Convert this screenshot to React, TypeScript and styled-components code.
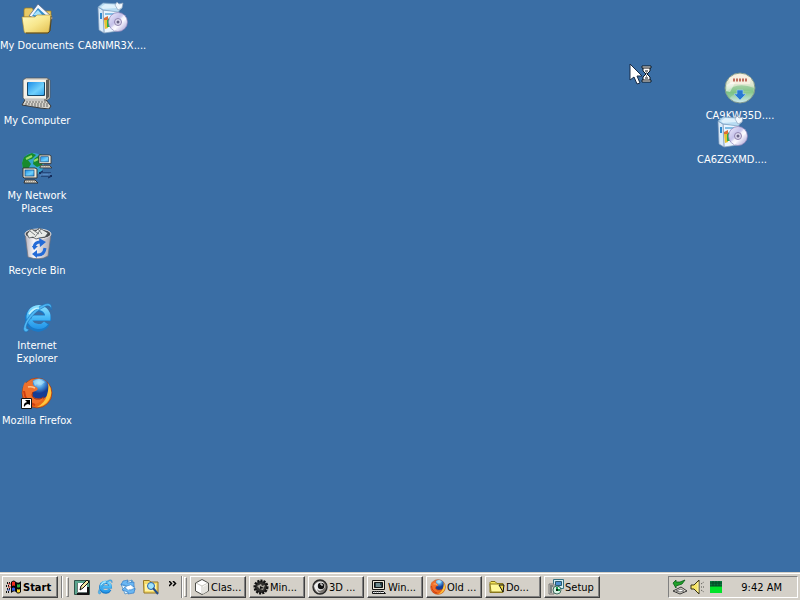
import React from "react";
import styled, { createGlobalStyle, css } from "styled-components";

const GlobalStyle = createGlobalStyle`
  * { box-sizing: border-box; }
  body {
    margin: 0;
    font-family: Tahoma, "DejaVu Sans Condensed", "DejaVu Sans", sans-serif;
    font-size: 11px;
    line-height: 13px;
    color: #000;
  }
  button { font: inherit; color: inherit; }
`;

const Screen = styled.div`
  display: flex;
  flex-direction: column;
  height: 100vh;
  overflow: hidden;
  background: #3a6ea5;
`;

const Desktop = styled.main`
  position: relative;
  flex: 1;
  min-height: 0;
  padding: 2px 0 0 1px;
`;

const IconGrid = styled.div`
  display: grid;
  grid-auto-flow: column;
  grid-template-rows: repeat(6, 72px);
  grid-auto-columns: 72px;
  gap: 3px;
`;

const Shortcut = styled.button`
  display: flex;
  flex-direction: column;
  align-items: center;
  gap: 5px;
  width: 72px;
  padding: 0;
  border: 0;
  background: transparent;
  color: #fff;
  text-align: center;
  cursor: default;
`;

const ShortcutLabel = styled.span<{ $wrap?: boolean }>`
  white-space: ${(p) => (p.$wrap ? "normal" : "nowrap")};
`;

const Loose = styled.div<{ $top: number; $right: number }>`
  position: absolute;
  top: ${(p) => p.$top}px;
  right: ${(p) => p.$right}px;
`;

const Pointer = styled.svg`
  position: absolute;
  top: 64px;
  left: 629px;
`;

const Taskbar = styled.footer`
  display: flex;
  align-items: center;
  height: 28px;
  padding: 2px 2px 0;
  background: #d4d0c8;
  box-shadow: inset 0 1px #d4d0c8, inset 0 2px #fff;
`;

const raised = css`
  border: 1px solid;
  border-color: #fff #404040 #404040 #fff;
  box-shadow: inset -1px -1px #808080;
  background: #d4d0c8;
`;

const StartButton = styled.button`
  ${raised}
  display: flex;
  align-items: center;
  gap: 1px;
  width: 56px;
  height: 22px;
  padding: 0 3px;
  font-weight: bold;
`;

const Grip = styled.span<{ $gap: number }>`
  width: 3px;
  height: 20px;
  margin-left: ${(p) => p.$gap}px;
  border: 1px solid;
  border-color: #fff #808080 #808080 #fff;
`;

const Divider = styled.span`
  width: 2px;
  height: 22px;
  margin-left: 3px;
  border-left: 1px solid #808080;
  border-right: 1px solid #fff;
`;

const QuickLaunch = styled.nav`
  display: flex;
  align-items: center;
  gap: 7px;
  margin-left: 5px;
`;

const QuickButton = styled.button`
  display: flex;
  padding: 0;
  border: 0;
  background: transparent;
`;

const More = styled.button`
  display: flex;
  align-self: flex-start;
  width: 11px;
  margin-left: 8px;
  padding: 7px 0 0 2px;
  border: 0;
  background: transparent;
`;

const Tasks = styled.div`
  display: flex;
  flex: 1;
  min-width: 0;
  gap: 3px;
  margin-left: 3px;
`;

const Task = styled.button`
  ${raised}
  display: flex;
  align-items: center;
  gap: 1px;
  width: 56px;
  height: 22px;
  padding: 0 2px 0 3px;
  white-space: nowrap;
`;

const Tray = styled.div`
  display: flex;
  align-items: center;
  gap: 2px;
  width: 130px;
  height: 22px;
  padding: 0 15px 0 3px;
  border: 1px solid;
  border-color: #808080 #fff #fff #808080;
`;

const Clock = styled.time`
  margin-left: auto;
`;

const Definitions = styled.svg`
  position: absolute;
  width: 0;
  height: 0;
`;

const Picture = styled.svg`
  flex: none;
`;

function Svg({ size = 32, box = 32, children }: { size?: number; box?: number; children: React.ReactNode }) {
  return (
    <Picture width={size} height={size} viewBox={`0 0 ${box} ${box}`} aria-hidden="true">
      {children}
    </Picture>
  );
}

function Gradients() {
  return (
    <Definitions aria-hidden="true">
      <defs>
        <linearGradient id="folder" x2="1" y2="1"><stop stopColor="#fffbc0" /><stop offset=".5" stopColor="#f7e68c" /><stop offset="1" stopColor="#e2bd4c" /></linearGradient>
        <linearGradient id="screen" x2="1" y2="1"><stop stopColor="#1e8fe8" /><stop offset=".6" stopColor="#6fd0fc" /><stop offset="1" stopColor="#35a5ee" /></linearGradient>
        <linearGradient id="bin" x2="1"><stop stopColor="#b3b0bb" /><stop offset=".35" stopColor="#f9f8fc" /><stop offset="1" stopColor="#aaa6ae" /></linearGradient>
        <linearGradient id="ie" gradientUnits="userSpaceOnUse" x1="0" y1="4" x2="0" y2="29"><stop stopColor="#8ae0ff" /><stop offset=".5" stopColor="#43b6f6" /><stop offset="1" stopColor="#1c8ce4" /></linearGradient>
        <linearGradient id="fox" x2="1" y2="1"><stop stopColor="#f58a3a" /><stop offset=".5" stopColor="#e44d13" /><stop offset="1" stopColor="#f28a1c" /></linearGradient>
        <radialGradient id="globe" cx=".5" cy=".2"><stop stopColor="#c9f2ff" /><stop offset=".5" stopColor="#4a9ade" /><stop offset="1" stopColor="#153c93" /></radialGradient>
        <linearGradient id="disc" x2="1" y2="1"><stop stopColor="#f3f0ff" /><stop offset=".4" stopColor="#c5c2ea" /><stop offset=".6" stopColor="#faf8ff" /><stop offset="1" stopColor="#9992cc" /></linearGradient>
        <linearGradient id="orb" x2="0" y2="1"><stop stopColor="#f7f0dc" /><stop offset=".4" stopColor="#dce7cf" /><stop offset=".65" stopColor="#8bc98d" /><stop offset="1" stopColor="#d1eaf4" /></linearGradient>
      </defs>
    </Definitions>
  );
}

const DocumentsIcon = () => (
  <Svg>
    <path d="M3 8q0-2 2-2h6l2 3h17v6H3z" fill="#e9ca65" stroke="#a27c1b" strokeWidth=".7" />
    <path d="m8 14 9-12 15 14-5 5z" fill="#f3f7ff" stroke="#4d5e7c" strokeWidth=".7" />
    <path d="m11 14 6-8 10 9-3 4z" fill="#338dcc" />
    <path d="m12 13 5-5 5 6z" fill="#a5e0fa" />
    <path d="M1 15h13l2-2h13q2 0 1 2l-2 14q0 2-2 2H5q-2 0-2-2z" fill="url(#folder)" stroke="#b18d2c" strokeWidth=".6" />
    <path d="M30 14v5l-1 10-2 2H5" fill="none" stroke="#594517" />
  </Svg>
);

const ComputerIcon = () => (
  <Svg>
    <path d="m2 3 3-2h21l3 2v18l-4 3H5l-3-3z" fill="#d8d6ce" stroke="#555" strokeWidth=".7" />
    <path d="M3 3h22v18H3z" fill="#f4f1e9" />
    <path d="m25 3 3-1v18l-3 3z" fill="#5f5f5d" />
    <rect x="6" y="5" width="18" height="14" rx="1" fill="#154768" />
    <rect x="7" y="5" width="16" height="13" rx="1" fill="url(#screen)" />
    <path d="M4 23h21l5 6-2 3-9-1-18-3z" fill="#d8d5cd" stroke="#393939" />
    <path d="M5 25h20M4 27h23M10 29h17" stroke="#666" strokeDasharray="2 1" />
    <path d="M4 23h19" stroke="#fff" />
  </Svg>
);

const Monitor = () => (
  <>
    <path d="M0 0h12l2 1v9H1L0 9z" fill="#eee9d9" stroke="#343434" />
    <rect x="2" y="2" width="9" height="6" fill="url(#screen)" stroke="#0e477d" strokeWidth=".7" />
    <path d="M2 12h10l3 3H1z" fill="#ded9cc" stroke="#333" />
    <path d="M3 13h9" stroke="#817b70" strokeDasharray="1 1" />
  </>
);

const NetworkIcon = () => (
  <Svg>
    <circle cx="12" cy="12" r="11" fill="#36a6cf" />
    <path d="M1 11q1-8 10-10l4 2-4 4-4 1 3 4-3 5-5 1zM13 7l7-5 3 5-2 6-5 2-4-3z" fill="#178a2d" />
    <path d="M5 7 11 4M13 9l4-2" stroke="#94dc63" strokeWidth="2" />
    <path d="M18 21h12M20 24h11M22 19l-4 2 4 2M27 22l4 2-4 2" fill="none" stroke="#112755" />
    <path d="M20 22h10M19 23h10" stroke="#5e94ce" />
    <g transform="translate(18 3) scale(.86)"><Monitor /></g>
    <g transform="translate(2 16)"><Monitor /></g>
  </Svg>
);

const BinIcon = () => (
  <Svg>
    <path d="m4 6 26 1-3 22q-8 5-20 1z" fill="url(#bin)" stroke="#77727a" strokeWidth=".7" />
    <ellipse cx="17" cy="7" rx="13" ry="5" fill="#494b4e" stroke="#e8e6e9" />
    <path d="m6 7 4-5 5 2 3-3 4 2 5 3-3 4-6 1-3 1-3-2-4 1z" fill="#e9ebe8" stroke="#454a50" strokeWidth=".7" />
    <path d="m9 4 5 4m3-6 4 5m-9-4 6 4m2-5-6 8" stroke="#5c6166" strokeWidth=".8" />
    <g fill="none" stroke="#246bd7" strokeWidth="3"><path d="M13 20q1-5 6-5" /><path d="M15 28q8 1 9-7" /></g>
    <path d="m18 11 7 4-6 5zM11 19h6l-4 4zM16 23v8l-5-4z" fill="#246bd7" />
  </Svg>
);

const InternetShape = () => (
  <>
    <path d="M26 21A10 10 0 1 1 27 16H11" fill="none" stroke="#197ac9" strokeWidth="6" />
    <path d="M25 21A9.5 9.5 0 1 1 27 16H11" fill="none" stroke="url(#ie)" strokeWidth="5" />
    <path d="M5 30Q0 29 5 19Q13 6 24 2Q32 0 30 8Q30 3 25 4Q14 9 7 20Q3 28 8 27Q7 30 5 30Z" fill="#4fb8f3" stroke="#1b6fb9" strokeWidth=".6" />
    <path d="M8 12q4-6 10-6" stroke="#c5f4ff" fill="none" strokeWidth="1.5" />
  </>
);
const InternetIcon = () => <Svg><InternetShape /></Svg>;

const FoxShape = () => (
  <>
    <circle cx="16" cy="16" r="15" fill="url(#fox)" stroke="#8f3515" strokeWidth=".6" />
    <circle cx="18" cy="12" r="10.5" fill="url(#globe)" />
    <path d="m12 4 6-2 6 3-4 3-4-1-2 2z" fill="#a4e0f8" opacity=".7" />
    <path d="M27 6q6 9 1 17-5 7-12 7 8-4 10-12 2-6 1-12Z" fill="#ffc53d" />
    <path d="M4 5q1 2 3 2 2-3 5-3-1 3 1 5 3 1 4 3-1 2-5 3-2 4 2 6 5 2 9-1-3 6-9 7Q4 26 2 18 1 10 4 5Z" fill="#f0702a" />
    <path d="M3 14q1 11 11 14" fill="none" stroke="#cf3d10" strokeWidth="2" />
    <path d="M12 15q-3 5 3 7 4 1 8-2" fill="none" stroke="#9c3012" />
    <path d="M7 10q3-1 7 1" stroke="#ffc38a" fill="none" strokeWidth="1.5" />
  </>
);

const FirefoxIcon = () => (
  <Svg>
    <FoxShape />
    <path d="M.5 21.5h10v10H.5z" fill="#fff" stroke="#151515" />
    <path d="M3 30q-1-4 3-5l-2-2h5v5l-2-1q-2 0-4 3Z" />
  </Svg>
);

const SetupPackage = () => (
  <Svg>
    <path d="m7 8 16 1-1 20-14 2z" fill="#eaf5ff" stroke="#8aa3be" strokeWidth=".7" />
    <path d="m2 5 5 3 1 23-5-3z" fill="#d8eafa" stroke="#829bb9" strokeWidth=".7" />
    <path d="m2 5 5-4 17 1 2 4-4 4L7 8z" fill="#b8dcf2" stroke="#7c9fc0" strokeWidth=".7" />
    <path d="m5 5 4-3 13 1-2 3-13 1z" fill="#def1fc" />
    <path d="m19 3 2-3 2 2 4-1-1 5-4 2z" fill="#f1f8fd" stroke="#91a5be" strokeWidth=".7" />
    <path d="M4 11h2v6H4z" fill="#2e89ce" /><path d="M9 12h12" stroke="#83bfe5" strokeWidth="2" />
    <path d="m8 18 4-1v9l-3 1z" fill="#e6c331" /><path d="m11 17 4-1v9h-4z" fill="#2eac4b" /><path d="m8 16 4-2v4H8z" fill="#dc7035" />
    <circle cx="22" cy="20" r="9.5" fill="url(#disc)" stroke="#8980b5" strokeWidth=".7" />
    <path d="m22 20 6-7 2 5zM22 20l-7 6 4 3z" fill="#fff" opacity=".55" />
    <circle cx="22" cy="20" r="3.5" fill="#ddd9ef" stroke="#9185b0" /><circle cx="22" cy="20" r="1.5" fill="#686385" />
  </Svg>
);

const DownloadOrb = () => (
  <Svg>
    <circle cx="16" cy="16" r="15" fill="url(#orb)" stroke="#81998c" />
    <path d="M5 6Q16-1 27 6l-1 6H6z" fill="#f8f0e1" opacity=".9" />
    <path d="M9 8h15" stroke="#bd6d5c" strokeWidth="3" strokeDasharray="2 1" />
    <path d="M2 20q11-11 28-4l-1 4q-15-4-24 7z" fill="#71bd7f" opacity=".5" />
    <path d="M3 13q5-5 8-2l-5 9-4-1z" fill="#fff" opacity=".5" />
    <path d="M13 18h6v4h3l-6 6-6-6h3z" fill="#2879d2" stroke="#a6d5f5" strokeWidth=".6" />
  </Svg>
);

const WindowsFlag = () => (
  <Svg size={16} box={16}>
    <path d="M1 4h4M0 7h4M1 10h4M0 13h4" stroke="#111" strokeWidth="2" strokeDasharray="1 1" />
    <path d="M5 3q3-3 5 0 3 2 5-1v11q-3 3-5 0-2-2-5 1z" fill="#050505" />
    <path d="M6 3q2-1 3 0v4q-1-1-3 0z" fill="#f12b1d" /><path d="M11 5q1 1 3 0v3q-2 1-3 0z" fill="#36b244" />
    <path d="M6 9q2-1 3 0v3q-2-1-3 0z" fill="#315ee1" /><path d="M11 10q2 1 3 0v3q-2 1-3 0z" fill="#f7d52c" />
    <path d="M2 5h3M2 8h3" stroke="#dc3028" /><path d="M1 11h3" stroke="#3252c3" />
  </Svg>
);

const ShowDesktop = () => (
  <Svg size={16} box={16}>
    <path d="M.5 1.5h15v14H.5z" fill="#5aa58e" stroke="#315349" />
    <path d="M3 4h10v10H3z" fill="#fff" /><path d="M3.5 4v9.5H13" fill="none" stroke="#697876" />
    <path d="m6 11 1-4 6-6 2 2-6 6z" fill="#f5e8a4" stroke="#111" /><path d="M14 15V8M3 15h12" stroke="#111" strokeWidth="2" />
  </Svg>
);

const OutlookIcon = () => (
  <Svg size={16} box={16}>
    <path d="m1 5 11-4 3 10-10 4z" fill="#e4f4ff" stroke="#4d91c9" strokeWidth=".8" /><path d="m1 5 8 4 3-8" fill="none" stroke="#4f97cc" />
    <path d="m1 6 2-4 5-1-1 3 7-1v5l-3-2-4 1-3-1zM15 9l-1 5-6 1v-2l-6-2 3-3 1 2 5 1z" fill="#6bb7f2" stroke="#2873c4" strokeWidth=".6" />
    <path d="m6 8 5-2 1 3-4 2z" fill="#fff" />
  </Svg>
);

const SearchFolder = () => (
  <Svg size={16} box={16}>
    <path d="M.5 3V1.5H6L8 3h7v11H1z" fill="#f4db6c" stroke="#987723" />
    <path d="M2 5h11v7H2z" fill="#fff4a9" /><circle cx="8" cy="7" r="3.5" fill="#9ee4fc" stroke="#2560b1" /><path d="m10 9 5 6" stroke="#244e89" strokeWidth="2" />
  </Svg>
);

const CubeIcon = () => <Svg size={16} box={16}><path d="m8 .5 6.5 3.5v8L8 15.5 1.5 12V4z" fill="#fff" stroke="#4b4b47" /><path d="m2 4 6 3 6-3M8 7v8" fill="none" stroke="#c9c7c0" /><path d="m9 8 5-3v7l-5 3z" fill="#e4e3de" /></Svg>;
const GearIcon = () => (
  <Svg size={16} box={16}>
    <circle cx="8" cy="8" r="6" fill="#222" stroke="#111" strokeWidth="3" strokeDasharray="2 1" />
    <circle cx="8" cy="8" r="5" fill="#302f2d" /><path d="m4 7 4-2 1 2 3-1-2 5-3-1z" fill="#aaa79f" /><path d="m7 7 4 2-4 1z" fill="#111" />
  </Svg>
);
const OrbitIcon = () => (
  <Svg size={16} box={16}>
    <circle cx="8" cy="8" r="7" fill="#77736e" stroke="#272727" strokeWidth="1.3" />
    <path d="M2 7q3-6 9-4 4 5-1 8-3 2-5-1 1 4 5 4-6 1-8-7" fill="#eee" /><circle cx="9" cy="7" r="3.2" fill="#111" /><path d="M8 5h2v2" stroke="#fff" fill="none" />
  </Svg>
);
const ConsoleIcon = () => (
  <Svg size={16} box={16}>
    <path d="M1.5 1.5h12v9h-12z" fill="#e8e4d8" stroke="#111" /><path d="M3.5 3.5h8v5h-8z" fill="#253d46" stroke="#111" />
    <path d="M5 5h4M5 7h5" stroke="#b7d5d5" /><path d="M1.5 12.5h11l2 2h-13z" fill="#eee" stroke="#111" /><path d="M3 13h7" stroke="#777" strokeDasharray="1 1" />
  </Svg>
);
const FolderIcon = () => <Svg size={16} box={16}><path d="M1 13.5v-10l1-1h4l2 2h6v9z" fill="#f6e65a" stroke="#847319" /><path d="M1 5h13v8H2z" fill="#fff99a" stroke="#8d7c20" /><path d="m10 6 4 7 1-7z" fill="#f2da48" stroke="#111" /></Svg>;
const InstallerIcon = () => (
  <Svg size={16} box={16}>
    <path d="M5.5.5h10v9h-10z" fill="#d4edf4" stroke="#347181" /><path d="M7.5 2.5h6v4h-6z" fill="#4d8fd0" stroke="#2a596c" />
    <path d="M1 5h5v10H1z" fill="#d1cdc4" stroke="#777" /><path d="M2 7h3M3 8v6" stroke="#273940" />
    <circle cx="9" cy="11" r="4" fill="#d7f4e5" stroke="#426c61" /><path d="M9 8v3h3" fill="none" stroke="#1a9a4c" strokeWidth="2" /><circle cx="9" cy="11" r="1" />
  </Svg>
);
const RemoveHardware = () => (
  <Svg size={16} box={16}>
    <path d="m1 12 8-4 6 4-7 3z" fill="#e1ddd0" stroke="#363636" /><path d="m4 12 5-2 3 2-4 1z" fill="#fff" stroke="#777" />
    <path d="m1 4 3-3v2h4l5-2-3 4-6 2v2z" fill="#21a12a" stroke="#075e14" strokeWidth=".8" />
  </Svg>
);
const Speaker = () => <Svg size={16} box={16}><path d="M1 6h3l5-5v14l-5-5H1z" fill="#f6e566" stroke="#383315" /><path d="M8 3v10" stroke="#fff5ba" /><path d="m11 5 3-2m-3 5h4m-4 3 3 2" stroke="#4c4c47" strokeDasharray="1 1" /></Svg>;
const Meter = () => <Svg size={16} box={16}><path d="M2 2h12v12H2z" fill="#00e329" /><path d="M2 2h12v5H2z" fill="#08783d" /><path d="M5 2v5m3-5v5m3-5v5M2 4h12M2 7h12" stroke="#064626" /></Svg>;

const shortcuts = [
  { label: "My Documents", Icon: DocumentsIcon },
  { label: "My Computer", Icon: ComputerIcon },
  { label: "My Network Places", Icon: NetworkIcon, wrap: true },
  { label: "Recycle Bin", Icon: BinIcon },
  { label: "Internet Explorer", Icon: InternetIcon, wrap: true },
  { label: "Mozilla Firefox", Icon: FirefoxIcon },
  { label: "CA8NMR3X....", Icon: SetupPackage },
];

const tasks = [
  { label: "Clas...", Icon: CubeIcon },
  { label: "Min...", Icon: GearIcon },
  { label: "3D ...", Icon: OrbitIcon },
  { label: "Win...", Icon: ConsoleIcon },
  { label: "Old ...", Icon: () => <Svg size={16}><FoxShape /></Svg> },
  { label: "Do...", Icon: FolderIcon },
  { label: "Setup", Icon: InstallerIcon },
];

function DesktopShortcut({ label, Icon, wrap }: { label: string; Icon: React.ComponentType; wrap?: boolean }) {
  return <Shortcut><Icon /><ShortcutLabel $wrap={wrap}>{label}</ShortcutLabel></Shortcut>;
}

export default function App() {
  return (
    <Screen>
      <GlobalStyle />
      <Gradients />
      <Desktop>
        <IconGrid>{shortcuts.map((item) => <DesktopShortcut key={item.label} {...item} />)}</IconGrid>
        <Loose $top={72} $right={24}><DesktopShortcut label="CA9KW35D...." Icon={DownloadOrb} /></Loose>
        <Loose $top={116} $right={32}><DesktopShortcut label="CA6ZGXMD...." Icon={SetupPackage} /></Loose>
        <Pointer width="24" height="22" viewBox="0 0 24 22" aria-hidden="true">
          <path d="M1 0v16l4-3 3 7 3-1-3-7h5z" fill="#fff" stroke="#172b46" />
          <path d="M13 2h9v2h-1v3l-3 3 3 3v3h1v2h-9v-2h1v-3l3-3-3-3V4h-1z" fill="#fff" stroke="#0d1822" />
          <path d="M14 4h7M14 16h7M16 7h3M17 9h1M17 12h1M16 14h3" stroke="#111" />
        </Pointer>
      </Desktop>
      <Taskbar>
        <StartButton><WindowsFlag />Start</StartButton>
        <Divider />
        <Grip $gap={3} />
        <QuickLaunch aria-label="Quick Launch">
          <QuickButton aria-label="Show Desktop"><ShowDesktop /></QuickButton>
          <QuickButton aria-label="Internet Explorer"><Svg size={16}><InternetShape /></Svg></QuickButton>
          <QuickButton aria-label="Outlook Express"><OutlookIcon /></QuickButton>
          <QuickButton aria-label="Search"><SearchFolder /></QuickButton>
        </QuickLaunch>
        <More aria-label="More shortcuts">
          <svg width="8" height="6" viewBox="0 0 8 6" aria-hidden="true"><path d="m0 0 2.5 2.5L0 5M4 0l2.5 2.5L4 5" fill="none" stroke="#000" strokeWidth="1.5" /></svg>
        </More>
        <Divider />
        <Grip $gap={1} />
        <Tasks>{tasks.map(({ label, Icon }) => <Task key={label}><Icon />{label}</Task>)}</Tasks>
        <Tray><RemoveHardware /><Speaker /><Meter /><Clock>9:42 AM</Clock></Tray>
      </Taskbar>
    </Screen>
  );
}
